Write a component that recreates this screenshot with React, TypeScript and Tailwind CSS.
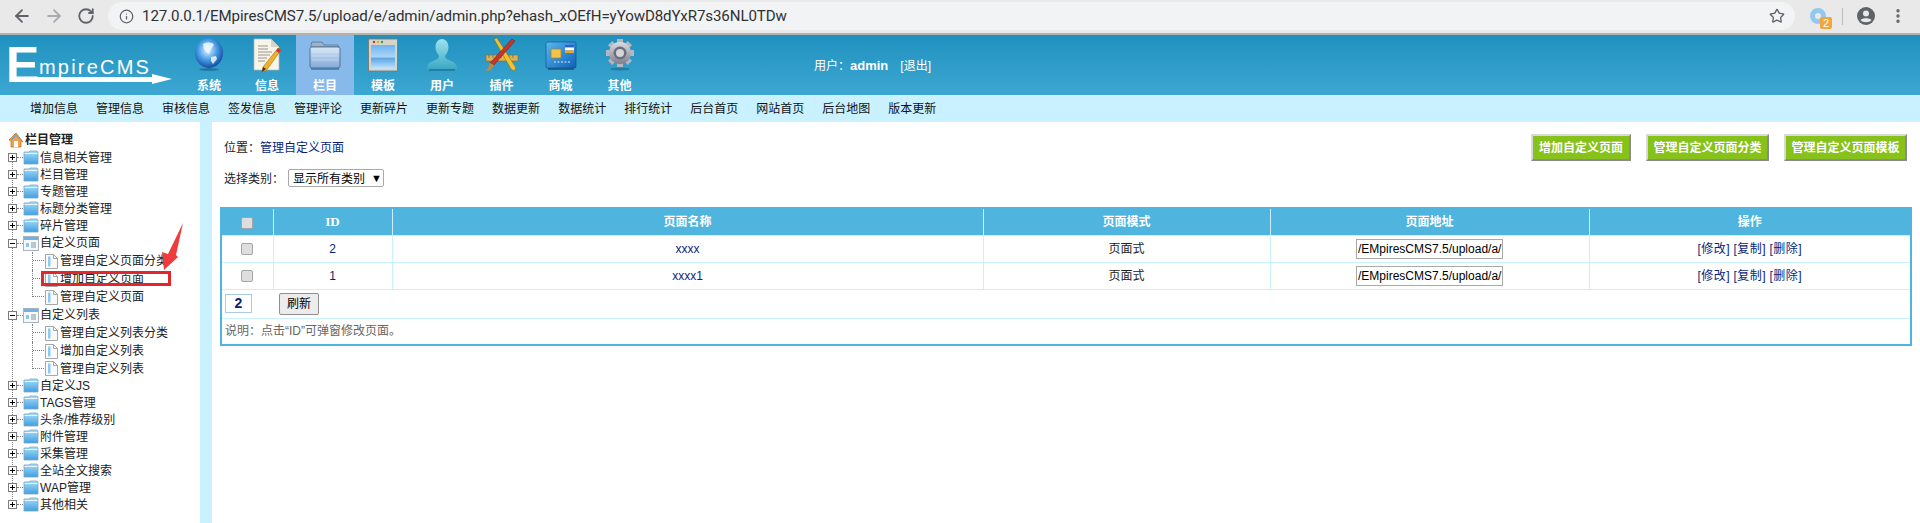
import { ArrowLeft, ArrowRight, RotateCw, Info, Star, MoreVertical } from 'lucide-react'
import type { ReactNode } from 'react'

const font = 'font-["Liberation_Sans","Noto_Sans_CJK_SC",sans-serif]'

function Globe() {
  return (
    <svg width="30" height="34" viewBox="0 0 30 34">
      <defs>
        <radialGradient id="globe" cx="0.45" cy="0.4" r="0.65">
          <stop offset="0" stopColor="#e6f4ff" />
          <stop offset="0.5" stopColor="#4a9fe8" />
          <stop offset="1" stopColor="#0b3f96" />
        </radialGradient>
      </defs>
      <ellipse cx="15" cy="15" rx="14" ry="15" fill="url(#globe)" />
      <path d="M9 6c4-2 9-2 11 1l-3 4-2 5-3-2-2-3zM17 19l5-1 1 3-4 5-2-3z" fill="#f0f8ff" opacity="0.85" />
      <ellipse cx="15" cy="31.5" rx="10" ry="1.5" fill="#0d4f78" opacity="0.5" />
    </svg>
  )
}

function Doc() {
  return (
    <svg width="30" height="34" viewBox="0 0 30 34">
      <path d="M2 1h17l8 8v23H2z" fill="#f7f4ea" stroke="#b9b6aa" strokeWidth="0.7" />
      <path d="M19 1v8h8z" fill="#d7d4c8" />
      <path d="M6 8h10M6 11h10M6 14h14M6 17h12M6 20h9M6 23h7" stroke="#9a978c" strokeWidth="1" />
      <path d="M26 10l3 2-15 21-4 1 1-5z" fill="#f1b22a" stroke="#8a5a10" strokeWidth="0.5" />
      <path d="M26 10l3 2-2 3-3-2z" fill="#c43a2e" />
      <path d="M10 34l1-5 3 2z" fill="#333" />
    </svg>
  )
}

function Folder() {
  return (
    <svg width="32" height="34" viewBox="0 0 32 34">
      <defs>
        <linearGradient id="fold" x1="0" y1="0" x2="0" y2="1">
          <stop offset="0" stopColor="#dbe9f8" />
          <stop offset="0.5" stopColor="#a9c6e8" />
          <stop offset="1" stopColor="#86abd6" />
        </linearGradient>
      </defs>
      <path d="M2 7l1-3h10l2 3h14l1 2H2z" fill="#9fb2c8" stroke="#47617f" strokeWidth="0.6" />
      <rect x="1" y="9" width="30" height="21" rx="2" fill="url(#fold)" stroke="#47617f" strokeWidth="0.8" />
      <path d="M3 14h26M3 18h26M3 22h26" stroke="#fff" strokeWidth="0.6" opacity="0.5" />
      <rect x="2" y="30" width="28" height="2" fill="#2f6a99" opacity="0.6" />
    </svg>
  )
}

function Template() {
  return (
    <svg width="30" height="34" viewBox="0 0 30 34">
      <defs>
        <linearGradient id="tpl" x1="0" y1="0" x2="0" y2="1">
          <stop offset="0" stopColor="#6fb4ef" />
          <stop offset="0.5" stopColor="#a9d5f8" />
          <stop offset="0.55" stopColor="#5ca6e4" />
          <stop offset="1" stopColor="#c5e5fb" />
        </linearGradient>
      </defs>
      <rect x="0.5" y="1" width="29" height="32" fill="#d8d4ca" stroke="#77746c" strokeWidth="0.8" />
      <rect x="3" y="7" width="24" height="24" fill="url(#tpl)" />
      <circle cx="6" cy="4" r="1.2" fill="#c43a2e" />
      <circle cx="10" cy="4" r="1.2" fill="#e2a826" />
      <circle cx="14" cy="4" r="1.2" fill="#3fa04a" />
    </svg>
  )
}

function User() {
  return (
    <svg width="32" height="34" viewBox="0 0 32 34">
      <defs>
        <linearGradient id="usr" x1="0" y1="0" x2="0" y2="1">
          <stop offset="0" stopColor="#9fe2ee" />
          <stop offset="1" stopColor="#3aa9c4" />
        </linearGradient>
      </defs>
      <path d="M16 1c4 0 6.500 4 6.500 8s-2 7-3.500 9c0 3 4 4 8 6 3 1.500 4 4 4 7H1c0-3 1-5.500 4-7 4-2 8-3 8-6-1.500-2-3.500-5-3.500-9S12 1 16 1z" fill="url(#usr)" />
      <rect x="3" y="31" width="26" height="2" fill="#1d6a88" opacity="0.6" />
    </svg>
  )
}

function Tools() {
  return (
    <svg width="34" height="34" viewBox="0 0 34 34">
      <path d="M1 17h32v6H1z" fill="#d9b35c" stroke="#8a6a20" strokeWidth="0.6" />
      <path d="M4 17v3M8 17v3M12 17v3M16 17v3M20 17v3M24 17v3M28 17v3" stroke="#7a5a18" strokeWidth="0.7" />
      <path d="M9 1l3-1 19 30-2 3-3-2z" fill="#f2c230" stroke="#8a6a10" strokeWidth="0.5" />
      <path d="M27 1l3 2L9 27l-4-2z" fill="#c9342a" stroke="#7a1a14" strokeWidth="0.5" />
      <path d="M5 25l4 2-3 5-5 1 2-3z" fill="#c08a3a" />
    </svg>
  )
}

function Card() {
  return (
    <svg width="32" height="34" viewBox="0 0 32 34">
      <defs>
        <linearGradient id="crd" x1="0" y1="0" x2="1" y2="1">
          <stop offset="0" stopColor="#58b7ee" />
          <stop offset="1" stopColor="#0f62b8" />
        </linearGradient>
      </defs>
      <rect x="1" y="4" width="30" height="26" rx="1.500" fill="url(#crd)" stroke="#0c4a8c" strokeWidth="0.6" />
      <rect x="6" y="11" width="10" height="9" rx="1" fill="#f3c34a" stroke="#b37f15" strokeWidth="0.7" />
      <rect x="20" y="7" width="9" height="2.500" fill="#2a63c4" />
      <rect x="20" y="9.500" width="9" height="3" fill="#fff" />
      <rect x="20" y="12.500" width="9" height="2.500" fill="#f0a41c" />
      <path d="M9 24h16" stroke="#cfeaff" strokeWidth="1" strokeDasharray="2 1.500" />
      <rect x="3" y="30" width="26" height="2" fill="#0e3f66" opacity="0.6" />
    </svg>
  )
}

function Gear() {
  const teeth = [0, 45, 90, 135, 180, 225, 270, 315]
  return (
    <svg width="30" height="34" viewBox="0 0 30 34">
      <defs>
        <linearGradient id="gr" x1="0" y1="0" x2="0" y2="1">
          <stop offset="0" stopColor="#dcdde2" />
          <stop offset="1" stopColor="#7c7f8e" />
        </linearGradient>
      </defs>
      {teeth.map((a) => (
        <rect key={a} x="12" y="1" width="6" height="6" fill="#b4b6c0" transform={`rotate(${a} 15 15)`} />
      ))}
      <circle cx="15" cy="15" r="11" fill="url(#gr)" />
      <circle cx="15" cy="15" r="6.500" fill="#6a6d7c" />
      <circle cx="15" cy="15" r="4" fill="#d4d5db" />
      <ellipse cx="15" cy="31" rx="10" ry="1.500" fill="#17506e" opacity="0.45" />
    </svg>
  )
}

const navItems: { label: string; icon: ReactNode; width: string; active?: boolean }[] = [
  { label: '系统', icon: <Globe />, width: 'w-[58px]' },
  { label: '信息', icon: <Doc />, width: 'w-[58px]' },
  { label: '栏目', icon: <Folder />, width: 'w-[58px]', active: true },
  { label: '模板', icon: <Template />, width: 'w-[58px]' },
  { label: '用户', icon: <User />, width: 'w-[60px]' },
  { label: '插件', icon: <Tools />, width: 'w-[59px]' },
  { label: '商城', icon: <Card />, width: 'w-[59px]' },
  { label: '其他', icon: <Gear />, width: 'w-[59px]' },
]

const subNav = ['增加信息', '管理信息', '审核信息', '签发信息', '管理评论', '更新碎片', '更新专题', '数据更新', '数据统计', '排行统计', '后台首页', '网站首页', '后台地图', '版本更新']

function Logo() {
  return (
    <svg width="176" height="60" viewBox="0 0 176 60" className="shrink-0">
      <text x="6" y="47" fill="#fff" fontSize="50" fontWeight="bold" fontFamily="Liberation Sans">E</text>
      <text x="39" y="39" fill="#fff" fontSize="20" letterSpacing="2.2" fontFamily="Liberation Sans">mpireCMS</text>
      <path d="M10 42h142v-3l20 5-20 5v-2H10z" fill="#fff" />
    </svg>
  )
}

function Chrome() {
  return (
    <div className="flex h-[35px] items-center border-b-2 border-[#b4b2ae] bg-[#e9e9ea] pb-[1px]">
      <div className="flex w-[108px] shrink-0 items-center gap-[12px] pl-[12px] text-[#5f6368]">
        <ArrowLeft size={20} strokeWidth={2.2} />
        <ArrowRight size={20} strokeWidth={2.2} className="text-[#a9abae]" />
        <RotateCw size={18} strokeWidth={2.4} className="ml-[1px]" />
      </div>
      <div className="flex h-[28px] w-[1687px] shrink-0 items-center rounded-full bg-[#f1f3f4] pr-[10px] pl-[11px] text-[#5f6368]">
        <Info size={15} strokeWidth={2} />
        <span className="ml-[8px] flex-1 font-['Roboto',sans-serif] text-[15.100px] tracking-[-0.1px] text-[#303133]">
          127.0.0.1/EMpiresCMS7.5/upload/e/admin/admin.php?ehash_xOEfH=yYowD8dYxR7s36NL0TDw
        </span>
        <Star size={16} strokeWidth={2} className="text-[#5f6368]" />
      </div>
      <div className="ml-[15px] flex items-center">
        <div className="relative h-[16px] w-[16px]">
          <div className="h-[16px] w-[16px] rounded-full border-[5px] border-[#93c9f0]" />
          <span className="absolute top-[9px] right-[-6px] h-[12px] w-[12px] rounded-[2px] bg-[#f0a63c] text-center font-['Liberation_Sans'] text-[11px] leading-[12px] text-white">2</span>
        </div>
        <div className="ml-[16px] h-[17px] w-px bg-[#b9babd]" />
        <svg width="18" height="18" viewBox="0 0 18 18" className="ml-[14px]">
          <circle cx="9" cy="9" r="9" fill="#5f6368" />
          <circle cx="9" cy="6.500" r="3" fill="#e9e9ea" />
          <path d="M3.500 13c2-2.500 9-2.500 11 0-2 3-9 3-11 0z" fill="#e9e9ea" />
        </svg>
        <MoreVertical size={18} strokeWidth={2.5} className="ml-[14px] text-[#5f6368]" />
      </div>
    </div>
  )
}

function Header() {
  return (
    <div className="flex h-[60px] bg-gradient-to-b from-[#1f91bf] to-[#3ca7d2] text-white">
      <div className="w-[180px] shrink-0"><Logo /></div>
      <div className="flex shrink-0">
        {navItems.map((n) => (
          <div key={n.label} className={`flex flex-col items-center pt-[3px] ${n.width} ${n.active ? 'bg-[#88b9eb]' : ''}`}>
            <div className="flex h-[36px] items-start justify-center">{n.icon}</div>
            <span className="mt-[5px] text-[12px] leading-[14px] font-bold">{n.label}</span>
          </div>
        ))}
      </div>
      <div className="pt-[24px] pl-[165px] text-[12px] leading-[14px]">
        用户：<b className="text-[13px] font-bold">admin</b>
        <span className="ml-[12px]">[退出]</span>
      </div>
    </div>
  )
}

function PlusBox({ open }: { open?: boolean }) {
  return (
    <span className="relative flex h-[9px] w-[9px] shrink-0 items-center justify-center border border-[#7d7d7d] bg-white">
      <span className="h-px w-[5px] bg-black" />
      {!open && <span className="absolute h-[5px] w-px bg-black" />}
    </span>
  )
}

function FolderIcon() {
  return (
    <svg width="16" height="15" viewBox="0 0 16 15" className="shrink-0">
      <defs>
        <linearGradient id="tf" x1="0" y1="0" x2="0" y2="1">
          <stop offset="0" stopColor="#a8ddf8" />
          <stop offset="1" stopColor="#3f9fe0" />
        </linearGradient>
      </defs>
      <path d="M1 2h5l1-1h7l1 1v12H1z" fill="url(#tf)" stroke="#7fa6bf" strokeWidth="0.8" />
      <path d="M1.500 3.500h13" stroke="#e6f6ff" strokeWidth="1" />
    </svg>
  )
}

function ListIcon() {
  return (
    <svg width="16" height="15" viewBox="0 0 16 15" className="shrink-0">
      <rect x="0.500" y="0.500" width="15" height="14" fill="#f6f8fa" stroke="#a9b3bb" />
      <rect x="1" y="1" width="14" height="3" fill="#6cb4e8" />
      <rect x="3" y="7" width="3" height="4" fill="#8ec6ec" />
      <path d="M8 7h5M8 9h5M8 11h5" stroke="#7f97a8" />
    </svg>
  )
}

function PageIcon() {
  return (
    <svg width="13" height="15" viewBox="0 0 13 15" className="shrink-0">
      <path d="M0.500 0.500h8l4 4v10h-12z" fill="#fafafa" stroke="#a7a7a7" />
      <rect x="3" y="2.500" width="2.500" height="10" fill="#8ec9ef" />
      <path d="M8.500 0.500v4h4" fill="none" stroke="#a7a7a7" />
    </svg>
  )
}

function TreeGroup({ label, open, icon, h = 'h-[17px]' }: { label: string; open?: boolean; icon?: ReactNode; h?: string }) {
  return (
    <div className={`flex items-center pl-[8px] ${h}`}>
      <PlusBox open={open} />
      <span className="h-0 w-[6px] shrink-0 border-t border-dotted border-[#7d7d7d]" />
      {icon ?? <FolderIcon />}
      <span className="ml-[1px] whitespace-nowrap text-[12px] text-[#222]">{label}</span>
    </div>
  )
}

function TreeChild({ label, marked, last, h = 'h-[18px]' }: { label: string; marked?: boolean; last?: boolean; h?: string }) {
  return (
    <div className={`relative flex items-center pl-[32px] ${h}`}>
      <span className={`w-[12px] shrink-0 self-stretch border-dotted border-[#7d7d7d] ${last ? '' : 'border-l'}`}>
        <span className={`block h-[9px] border-b border-dotted border-[#7d7d7d] ${last ? 'border-l' : ''}`} />
      </span>
      <span className="ml-[1px] flex"><PageIcon /></span>
      <span className="ml-[2px] whitespace-nowrap text-[12px] text-[#222]">{label}</span>
      {marked && <span className="absolute top-[1px] left-[41px] h-[15px] w-[130px] border-[3px] border-[#e2262e]" />}
    </div>
  )
}

function Sidebar() {
  const first = ['信息相关管理', '栏目管理', '专题管理', '标题分类管理', '碎片管理']
  const last = ['自定义JS', 'TAGS管理', '头条/推荐级别', '附件管理', '采集管理', '全站全文搜索', 'WAP管理', '其他相关']
  return (
    <div className="relative w-[200px] shrink-0 overflow-hidden bg-white pt-[9px]">
      <span className="absolute top-[38px] bottom-[18px] left-[12px] border-l border-dotted border-[#7d7d7d]" />
      <div className="relative flex h-[18px] items-center pl-[8px]">
        <svg width="16" height="16" viewBox="0 0 16 16" className="shrink-0">
          <path d="M8 1L1 8l2 1v6h10V9l2 1z" fill="#f2a24a" stroke="#c06a18" strokeWidth="0.7" />
          <rect x="6" y="9" width="4" height="6" fill="#fff" />
          <path d="M3 8l5-5 5 5" fill="none" stroke="#5aa8e0" strokeWidth="1.200" />
        </svg>
        <span className="ml-[1px] text-[12px] font-bold text-[#222]">栏目管理</span>
      </div>
      <div className="relative">
        {first.map((l) => <TreeGroup key={l} label={l} />)}
        <TreeGroup label="自定义页面" open icon={<ListIcon />} h="h-[18px]" />
        <TreeChild label="管理自定义页面分类" />
        <TreeChild label="增加自定义页面" marked />
        <TreeChild label="管理自定义页面" last />
        <TreeGroup label="自定义列表" open icon={<ListIcon />} h="h-[18px]" />
        <TreeChild label="管理自定义列表分类" />
        <TreeChild label="增加自定义列表" />
        <TreeChild label="管理自定义列表" last h="h-[17px]" />
        {last.map((l) => <TreeGroup key={l} label={l} />)}
      </div>
      <svg width="30" height="50" viewBox="0 0 30 50" className="absolute top-[100px] left-[160px]">
        <path d="M23 1L16 33l2 2L4 48 2 30l6 2z" fill="#ee3b3b" />
      </svg>
    </div>
  )
}

function GreenBtn({ label, w }: { label: string; w: string }) {
  return (
    <div className={`flex h-[27px] items-center justify-center border-2 border-t-[#d9d9d9] border-r-[#8a8a8a] border-b-[#8a8a8a] border-l-[#d9d9d9] bg-[#86c21a] text-[12px] font-bold whitespace-nowrap text-white ${w}`}>
      {label}
    </div>
  )
}

function Checkbox() {
  return <span className="inline-block h-[12px] w-[12px] rounded-[2px] border border-[#a5a5a5] bg-[#dedede] align-middle" />
}

const rows = [
  { id: '2', name: 'xxxx' },
  { id: '1', name: 'xxxx1' },
]

function Main() {
  return (
    <div className="flex-1 bg-white pt-[12px] pr-[8px] pl-[8px]">
      <div className="flex h-[27px] items-center pr-[5px]">
        <span className="ml-[4px] text-[12px] text-[#222]">位置：<span className="text-[#0a1f7a]">管理自定义页面</span></span>
        <div className="ml-auto flex gap-[15px]">
          <GreenBtn label="增加自定义页面" w="w-[100px]" />
          <GreenBtn label="管理自定义页面分类" w="w-[123px]" />
          <GreenBtn label="管理自定义页面模板" w="w-[123px]" />
        </div>
      </div>
      <div className="mt-[8px] ml-[4px] flex h-[18px] items-center text-[12px] text-[#222]">
        <span className="w-[64px] pt-[1px]">选择类别：</span>
        <span className="flex h-[18px] w-[96px] items-center rounded-[2px] border border-[#a9a9a9] pt-[1px] pl-[4px] text-black">
          显示所有类别
          <span className="ml-[6px] text-[11px]">▼</span>
        </span>
      </div>
      <div className="mt-[20px] border-2 border-[#4fb4de] text-[12px]">
        <table className="w-full table-fixed border-collapse text-center">
          <colgroup>
            <col className="w-[51px]" />
            <col className="w-[119px]" />
            <col className="w-[591px]" />
            <col className="w-[287px]" />
            <col className="w-[319px]" />
            <col />
          </colgroup>
          <thead>
            <tr className="h-[26px] bg-[#4fb4de] font-bold text-white">
              {['', 'ID', '页面名称', '页面模式', '页面地址', '操作'].map((h, i) => (
                <th key={i} className={`border-r border-b border-[#c9f0ff] font-bold last:border-r-0 ${h === 'ID' ? "font-['Liberation_Serif'] text-[13px]" : ''}`}>
                  {i === 0 ? <Checkbox /> : h}
                </th>
              ))}
            </tr>
          </thead>
          <tbody>
            {rows.map((r) => (
              <tr key={r.id} className="h-[27px] border-b border-[#c9f0ff] text-[#222]">
                <td className="border-r border-[#c9f0ff]"><Checkbox /></td>
                <td className="border-r border-[#c9f0ff] text-[#0a1f7a]">{r.id}</td>
                <td className="border-r border-[#c9f0ff] text-[#0a1f7a]">{r.name}</td>
                <td className="border-r border-[#c9f0ff]">页面式</td>
                <td className="border-r border-[#c9f0ff]">
                  <input readOnly value="/EMpiresCMS7.5/upload/a/" className="h-[20px] w-[147px] border border-[#a9a9a9] pl-[1px] align-middle text-[12px] text-black" />
                </td>
                <td className="tracking-[0.4px] text-[#0a1f7a]">[修改] [复制] [删除]</td>
              </tr>
            ))}
          </tbody>
        </table>
        <div className="flex h-[29px] items-center border-b border-[#c9f0ff] pl-[3px]">
          <span className="flex h-[19px] w-[27px] items-center justify-center border border-[#a9cbe4] text-[14px] font-bold text-[#0a1f7a]">2</span>
          <span className="ml-[27px] flex h-[22px] w-[40px] items-center justify-center rounded-[2px] border border-[#8f8f8f] bg-[#ececec] text-black">刷新</span>
        </div>
        <div className="flex h-[25px] items-center pl-[3px] text-[#666]">说明：点击“ID”可弹窗修改页面。</div>
      </div>
    </div>
  )
}

export default function App() {
  return (
    <div className={`h-[523px] w-[1920px] overflow-hidden bg-[#c9f1ff] ${font}`}>
      <Chrome />
      <Header />
      <div className="flex h-[27px] items-center gap-[18px] pl-[30px] text-[12px] whitespace-nowrap text-[#111]">
        {subNav.map((s) => <span key={s}>{s}</span>)}
      </div>
      <div className="flex h-[401px]">
        <Sidebar />
        <div className="w-[12px] shrink-0" />
        <Main />
      </div>
    </div>
  )
}
